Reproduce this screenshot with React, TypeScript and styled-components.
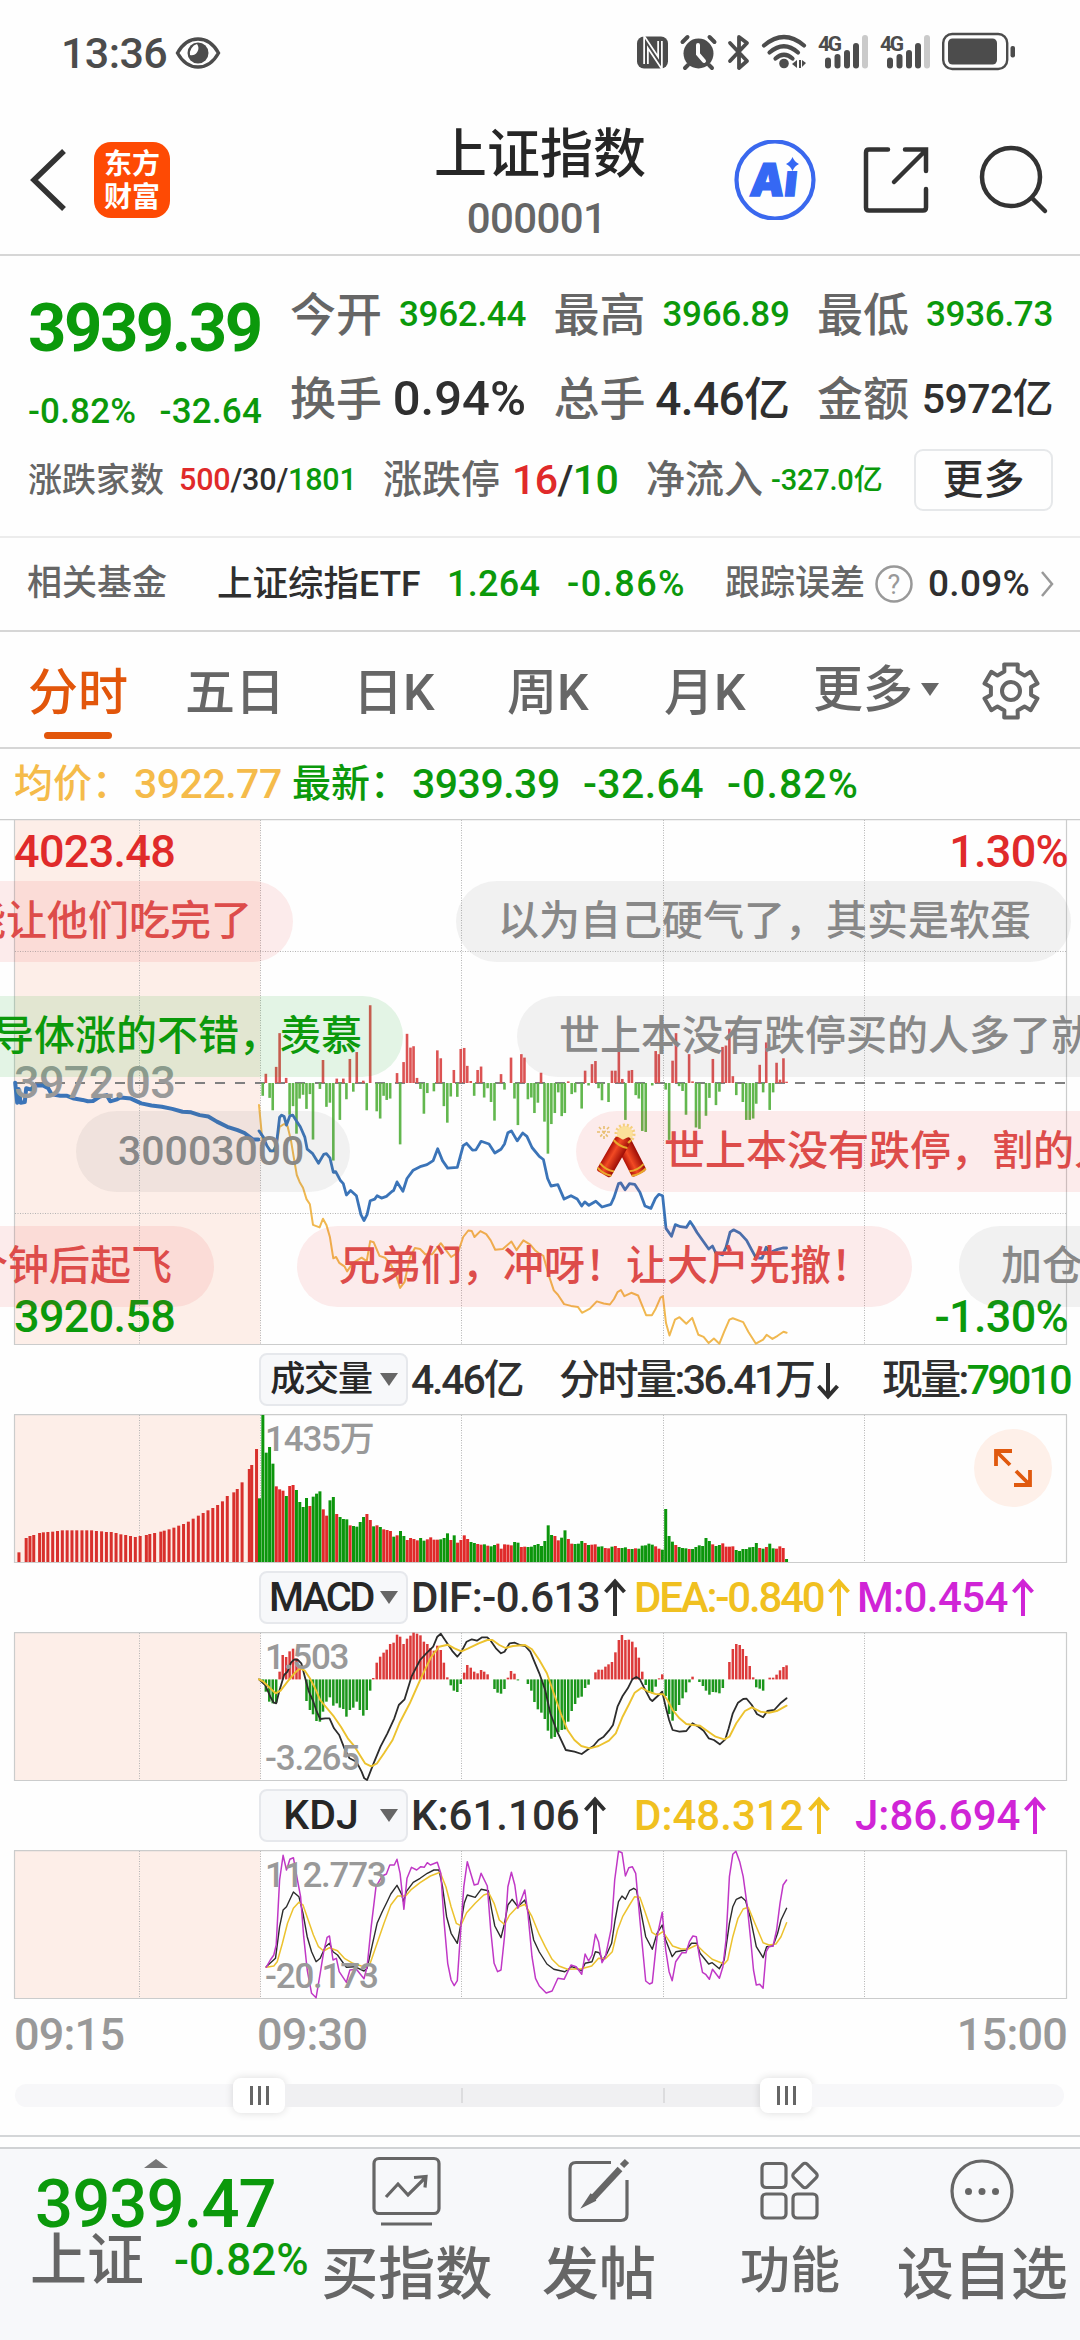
import React from 'react';
import styled, { createGlobalStyle, css } from 'styled-components';

const GREEN = '#0b990b';
const RED = '#e02a2a';
const DARK = '#2f2f2f';
const GRAY = '#666';
const YELLOW = '#f0c020';
const PURPLE = '#d024d6';
const LINE = '#cbcccc';

const Global = createGlobalStyle`
  html, body { margin: 0; padding: 0; background: #fefefe; }
  * { box-sizing: border-box; }
  body { font-family: Roboto, "Noto Sans CJK SC", sans-serif; font-weight: 500; }
`;

const Page = styled.div`
  width: 1080px;
  height: 2340px;
  overflow: hidden;
  display: flex;
  flex-direction: column;
  background: #fefefe;
  color: ${DARK};
  white-space: nowrap;
`;

/* ---------- status bar ---------- */
const StatusBar = styled.div`
  display: flex;
  justify-content: space-between;
  height: 106px;
  padding: 0 62px 0 61px;
  color: #4c4c4c;
`;
const Clock = styled.div`
  display: flex;
  align-items: center;
  gap: 8px;
  font-size: 43px;
  line-height: 106px;
  letter-spacing: -0.6px;
`;

const StatusIcons = () => (
  <svg width="382" height="106" viewBox="636 0 382 106" fill="#4c4c4c">
    <rect x="637" y="36.500" width="31" height="32" rx="7" />
    <path d="M646 64 V42 L660 63 V41" fill="none" stroke="#fefefe" strokeWidth="5.500" />
    <path d="M646 68 V42 L660 63 V37" fill="none" stroke="#4c4c4c" strokeWidth="2" />
    <circle cx="698.500" cy="53.500" r="15" />
    <path d="M682.500 42l5-5M714.500 42l-5-5M688 65l-3 3M709 65l3 3" stroke="#4c4c4c" strokeWidth="4" strokeLinecap="round" />
    <path d="M698 45v9l6 7" stroke="#fefefe" strokeWidth="4" fill="none" strokeLinecap="round" />
    <path d="M730 43l17 18-8 7V37l8 6-17 18" fill="none" stroke="#4c4c4c" strokeWidth="3.800" strokeLinecap="round" strokeLinejoin="round" />
    <g fill="none" stroke="#4c4c4c" strokeWidth="4.200" strokeLinecap="round">
      <path d="M764 45.500q20-17 40 0" />
      <path d="M769.500 52.500q14.500-12.500 28.500 0" />
      <path d="M775.500 58.500q8.500-7.500 17 0" />
    </g>
    <circle cx="784" cy="63.500" r="4.800" />
    <path d="M792 64l5-4v8zM799 60h2v8h-2zM802 60l4 3-4 4z" />
    {[0, 62].map((o) => (
      <g key={o}>
        <text x={818 + o} y="51" fontSize="21" fontWeight="700" textLength="24" fontFamily="Roboto, sans-serif">4G</text>
        <rect x={825 + o} y="57.500" width="6" height="11" rx="3" />
        <rect x={834.500 + o} y="54" width="6" height="14.500" rx="3" />
        <rect x={844 + o} y="50" width="6" height="18.500" rx="3" />
        <rect x={853 + o} y="43" width="6" height="25.500" rx="3" />
        <rect x={862 + o} y="35" width="6" height="33.500" rx="3" fill="#cacaca" />
      </g>
    ))}
    <rect x="943.200" y="34" width="64" height="35" rx="9" fill="none" stroke="#4c4c4c" strokeWidth="2.400" />
    <rect x="948" y="38.500" width="49" height="26" rx="4.500" />
    <rect x="1010.500" y="46" width="4.500" height="11.500" rx="2" />
  </svg>
);

const EyeIcon = () => (
  <svg width="46" height="34" viewBox="0 0 46 34">
    <path d="M2.500 17C8 7 15 3 23 3s15 4 20.500 14C38 27 31 31 23 31S8 27 2.500 17z" fill="none" stroke="#4c4c4c" strokeWidth="3.400" />
    <circle cx="23" cy="17" r="10.500" fill="#4c4c4c" />
    <path d="M22 8a7 7 0 0 1-7 11a10 10 0 0 1 7-11z" fill="#fefefe" />
  </svg>
);

/* ---------- header ---------- */
const Header = styled.div`
  display: grid;
  grid-template-columns: 94px 200px 436px 124px 116px 110px;
  height: 150px;
  border-bottom: 2px solid #d6d6d6;
`;
const HeadIcon = styled.div`
  padding-top: 34px;
`;
const Logo = styled.div`
  width: 76px;
  height: 76px;
  margin-top: 36px;
  border-radius: 17px;
  background: #fe4a04;
  color: #fff;
  font-weight: 700;
  font-size: 28px;
  line-height: 33px;
  padding-top: 6px;
  text-align: center;
`;
const TitleBlock = styled.div`
  text-align: center;
  width: 492px;
  padding-top: 12px;
`;
const Title = styled.div`
  font-size: 53px;
  line-height: 74px;
  color: #262626;
`;
const Code = styled.div`
  font-size: 42px;
  line-height: 54px;
  padding-right: 7px;
  color: ${GRAY};
  letter-spacing: -0.6px;
`;

/* ---------- quote ---------- */
const Quote = styled.div`
  height: 282px;
  padding: 17px 27px 0 28px;
  border-bottom: 2px solid #ececec;
`;
const QuoteTop = styled.div`
  display: flex;
  height: 168px;
`;
const PriceCol = styled.div`
  width: 263px;
  color: ${GREEN};
`;
const Price = styled.div`
  font-size: 67px;
  font-weight: 700;
  line-height: 110px;
  letter-spacing: -2.5px;
`;
const Changes = styled.div`
  display: flex;
  justify-content: space-between;
  padding-right: 28px;
  font-size: 35px;
  line-height: 58px;
  letter-spacing: 0.2px;
`;
const Stats = styled.div`
  display: grid;
  grid-template-columns: repeat(3, 236px);
  column-gap: 27.500px;
  grid-auto-rows: 84px;
`;
const Stat = styled.div`
  display: flex;
  justify-content: space-between;
  align-items: center;
  line-height: 84px;
`;
const StatName = styled.span`
  font-size: 46px;
  color: ${GRAY};
`;
const StatValue = styled.span<{ $size: number; $color: string; $ls?: number }>`
  font-size: ${(p) => p.$size}px;
  color: ${(p) => p.$color};
  letter-spacing: ${(p) => p.$ls || 0}px;
`;
const Breadth = styled.div`
  display: flex;
  align-items: center;
  height: 78px;
`;
const Cell = styled.span<{ $w: number; $size: number; $color?: string; $ls?: number }>`
  flex: none;
  width: ${(p) => p.$w}px;
  font-size: ${(p) => p.$size}px;
  line-height: 60px;
  color: ${(p) => p.$color || DARK};
  letter-spacing: ${(p) => p.$ls || 0}px;
`;
const Tint = styled.span<{ $c: string }>`
  color: ${(p) => p.$c};
`;
const MoreButton = styled.div`
  width: 139px;
  height: 62px;
  border: 2px solid #e6e8ea;
  border-radius: 9px;
  text-align: center;
  font-size: 41px;
  line-height: 58px;
`;

/* ---------- fund row ---------- */
const FundRow = styled.div`
  display: flex;
  align-items: center;
  height: 94px;
  padding-left: 27px;
  border-bottom: 2px solid #d6d6d6;
`;
const Help = styled.span`
  width: 54px;
  height: 40px;
`;

/* ---------- tabs ---------- */
const Tabs = styled.div`
  display: flex;
  height: 117px;
  padding-left: 28px;
  border-bottom: 2px solid #d6d6d6;
  font-size: 50px;
  line-height: 122px;
  color: ${GRAY};
`;
const Tab = styled.div<{ $w: number; $on?: boolean }>`
  width: ${(p) => p.$w}px;
  ${(p) =>
    p.$on &&
    css`
      color: #e2560b;
      &::after {
        content: '';
        display: block;
        width: 68px;
        height: 7px;
        margin: -22px 0 0 16px;
        border-radius: 4px;
        background: #e2560b;
      }
    `}
`;
const Triangle = styled.span<{ $up?: boolean; $w?: number }>`
  flex: none;
  display: inline-block;
  border-left: ${(p) => p.$w || 9}px solid transparent;
  border-right: ${(p) => p.$w || 9}px solid transparent;
  ${(p) => (p.$up ? 'border-bottom: 9px solid #777;' : 'border-top: 13px solid #666;')}
`;
const MoreTab = styled(Tab)`
  display: flex;
  align-items: center;
  gap: 8px;
`;
const GearBox = styled.div`
  padding-top: 29px;
  svg {
    display: block;
  }
`;

const InfoRow = styled.div`
  display: flex;
  align-items: center;
  height: 70px;
  padding-left: 14px;
`;

/* ---------- charts ---------- */
const Panel = styled.div<{ $h: number }>`
  position: relative;
  height: ${(p) => p.$h}px;
  overflow: hidden;
  svg {
    display: block;
  }
`;
const Corner = styled.span<{ $y: number; $c: string; $right?: boolean }>`
  position: absolute;
  top: ${(p) => p.$y}px;
  ${(p) => (p.$right ? 'right: 12px;' : 'left: 14px;')}
  font-size: 45px;
  line-height: 50px;
  letter-spacing: -0.7px;
  color: ${(p) => p.$c};
`;
const Scale = styled.span<{ $y: number }>`
  position: absolute;
  left: 265px;
  top: ${(p) => p.$y}px;
  font-size: 35px;
  line-height: 42px;
  letter-spacing: -1.2px;
  color: #999;
`;
const bubbleTone = {
  red: css`
    background: rgba(235, 50, 50, 0.095);
    color: #dd4c4a;
  `,
  gray: css`
    background: rgba(110, 110, 110, 0.085);
    color: #888;
  `,
  green: css`
    background: rgba(30, 170, 50, 0.12);
    color: ${GREEN};
  `,
};
const Bubble = styled.div<{ $x: number; $w: number; $row: number; $tone: keyof typeof bubbleTone; $pad?: number }>`
  position: absolute;
  left: ${(p) => p.$x}px;
  width: ${(p) => p.$w}px;
  top: ${(p) => 62 + p.$row * 115}px;
  height: 81px;
  border-radius: 41px;
  padding-left: ${(p) => p.$pad ?? 42}px;
  font-size: 41px;
  line-height: 81px;
  display: flex;
  ${(p) => bubbleTone[p.$tone]}
`;
const IndicatorBar = styled.div<{ $h: number }>`
  display: flex;
  align-items: center;
  height: ${(p) => p.$h}px;
  padding-left: 259px;
`;
const Picker = styled.div`
  display: flex;
  align-items: center;
  justify-content: space-between;
  width: 149px;
  height: 53px;
  margin-right: 3px;
  padding: 0 8px 0 8px;
  border: 2px solid #e6e8ec;
  border-radius: 8px;
  background: #f7f8fa;
  color: #262626;
`;
const PickerName = styled.span<{ $size: number; $ls?: number }>`
  width: 104px;
  text-align: center;
  font-size: ${(p) => p.$size}px;
  line-height: 49px;
  letter-spacing: ${(p) => p.$ls || 0}px;
`;
const Reading = styled.span<{ $w: number; $c?: string; $ls?: number; $size?: number }>`
  display: flex;
  flex: none;
  align-items: center;
  width: ${(p) => p.$w}px;
  font-size: ${(p) => p.$size || 42}px;
  line-height: 52px;
  letter-spacing: ${(p) => p.$ls || 0}px;
  color: ${(p) => p.$c || DARK};
  svg {
    flex: none;
  }
`;
const Expand = styled.div`
  position: absolute;
  right: 28px;
  top: 15px;
  width: 78px;
  height: 78px;
  border-radius: 50%;
  background: #fef0e9;
`;
const Times = styled.div`
  display: flex;
  height: 72px;
  padding: 0 13px 0 14px;
  font-size: 45px;
  line-height: 72px;
  letter-spacing: -0.8px;
  color: #999;
  span:nth-child(1) { width: 243px; }
  span:nth-child(2) { flex: 1; }
`;

const Arrow = ({ down, c }: { down?: boolean; c?: string }) => (
  <svg width="30" height="40" viewBox="0 0 30 40">
    <path d={down ? 'M15 3v33M5.500 26l9.500 10.500L24.500 26' : 'M15 38V4M5.500 14L15 3.500 24.500 14'} fill="none" stroke={c || DARK} strokeWidth="4" />
  </svg>
);

/* ---------- data ---------- */
type Pt = [number, number];
const parse = (left: string, right = ''): Pt[] => {
  const read = (s: string, off: number): Pt[] =>
    s.trim() === '' ? [] : s.trim().split(/\s+/).map((t) => {
      const [a, b] = t.split(':').map(Number);
      return [a / 2.904 + off, b];
    });
  return [...read(left, 0), ...read(right, 540)];
};
const project = (pts: Pt[], k: number, off: number): Pt[] => pts.map(([x, y]) => [x, y / k + off]);
const poly = (pts: Pt[]) => pts.map(([x, y]) => `${x.toFixed(1)},${y.toFixed(1)}`).join(' ');

const flow = parse(
  `772:766 802:746 812:648 831:778 938:726 978:780 997:780 1016:723 1036:703 1055:786 1075:567 1153:764 1172:732 1182:650 1192:690 1201:686 1211:778 1270:698 1280:721 1318:755 1338:694 1348:691 1357:743 1367:787 1387:755 1397:745 1455:767 1484:719 1514:709 1523:719
   763:830 783:836 792:872 841:885 851:860 861:940 870:838 880:827 890:868 900:825 909:957 929:810 948:862 958:850 968:1018 987:900 1006:840 1026:818 1065:872 1094:875 1104:896 1114:830 1123:842 1133:838 1162:971 1221:810 1231:882 1241:822 1260:817 1289:860 1299:908 1309:832 1328:833 1377:830 1406:835 1416:808 1426:848 1436:902 1465:812 1494:838 1504:915 1533:840 1543:835 1552:880 1562:850`,
  `3:763 82:788 131:757 151:738 161:729 209:757 219:757 229:680 239:781 258:757 267:755 336:700 345:709 385:728 395:648 433:709 443:788 502:723 530:688 540:684 550:635 560:773 638:740 657:675 687:734 697:783 707:721 716:789
   13:905 23:998 33:912 43:880 53:820 63:889 72:880 92:825 102:820 121:867 141:800 170:808 180:843 199:848 248:900 278:828 287:838 297:932 307:935 326:800 365:812 375:958 404:802 414:816 424:885 453:922 463:926 482:888 492:836 511:857 521:818 570:828 589:848 599:900 609:900 619:896 628:853 648:820 667:871 677:820`
);
const preOpen = parse(`44:792 50:850 54:810 60:850 72:848 76:808 90:812 100:800 125:800 140:808 150:826 175:830 195:830 215:838 240:842 255:846 270:845 290:832 310:828 320:846 340:840 350:835 380:838 410:852 440:858 470:862 500:868 530:876 555:878 580:886 605:890 630:905 660:920 690:930 710:938 735:957 750:957`);
const priceLine = parse(
  `752:932 765:950 775:975 785:990 795:990 803:970 812:892 818:886 825:890 832:915 842:888 850:886 862:905 872:920 885:950 892:985 908:998 925:1026 940:1000 948:998 958:1010 968:1052 975:1050 988:1075 997:1085 1006:1118 1018:1105 1035:1120 1048:1175 1057:1192 1066:1175 1075:1135 1088:1130 1095:1120 1108:1127 1122:1122 1138:1108 1143:1105 1153:1080 1170:1107 1182:1070 1200:1046 1220:1036 1240:1030 1258:1018 1271:984 1285:1018 1300:1040 1328:1038 1345:975 1355:968 1372:988 1382:987 1397:962 1420:970 1437:996 1455:985 1465:970 1475:937 1485:932 1502:961 1518:938 1530:948 1545:980 1566:1006`,
  `10:1015 22:1070 32:1092 52:1088 70:1130 90:1120 108:1130 121:1150 130:1138 142:1148 162:1136 180:1153 206:1145 215:1125 228:1085 235:1083 247:1103 260:1085 275:1087 290:1110 305:1150 322:1157 335:1128 345:1116 356:1120 366:1215 382:1238 393:1204 408:1210 425:1212 436:1195 445:1208 456:1227 490:1275 501:1266 510:1285 530:1292 540:1270 552:1226 562:1219 580:1228 600:1250 615:1278 627:1300 645:1302 657:1270 668:1285 690:1276 705:1272 716:1272`
);
const avgLine = parse(
  `752:857 762:960 775:975 790:992 803:975 812:920 825:912 835:918 845:960 855:1020 862:1060 870:1080 880:1097 890:1130 900:1145 909:1205 928:1212 938:1187 948:1205 958:1240 968:1302 976:1298 985:1315 1000:1325 1008:1340 1025:1315 1050:1300 1065:1310 1075:1252 1085:1255 1102:1295 1118:1300 1135:1320 1150:1350 1162:1388 1175:1370 1190:1300 1205:1272 1220:1275 1235:1290 1255:1290 1280:1258 1310:1298 1330:1285 1345:1240 1360:1221 1370:1223 1378:1240 1395:1223 1412:1232 1425:1250 1438:1277 1460:1275 1485:1253 1500:1278 1520:1250 1540:1262 1555:1280 1566:1288`,
  `10:1295 25:1350 40:1395 52:1408 70:1435 90:1440 110:1443 122:1460 145:1448 165:1427 185:1433 203:1436 215:1420 225:1400 235:1394 245:1412 265:1402 285:1410 295:1435 308:1467 325:1467 335:1450 350:1416 357:1412 366:1490 376:1526 392:1480 405:1473 425:1492 442:1475 460:1524 475:1530 490:1548 505:1535 521:1550 535:1515 550:1480 560:1476 590:1487 605:1515 627:1550 648:1538 658:1524 675:1536 690:1527 707:1515 716:1518`
);

const auction = parse(`55:637 76:594 87:588 98:585 115:579 126:577 139:576 153:575 167:573 181:571 195:571 209:571 223:571 238:571 252:571 266:571 280:573 295:574 309:576 323:576 337:579 351:583 365:585 379:588 393:591 407:588 425:585 435:582 449:579 467:575 477:572 491:568 505:563 519:557 533:552 547:545 561:536 576:527 590:519 604:511 618:504 632:495 646:484 660:468 679:457 689:447 703:427 724:387 731:375 745:327`);
const volume = `g475 g225 g338 g321 g371 r439 r448 r452 g468 r438 r435 g450 g486 g501 g474 r498 g470 g461 g454 r508 r527 g481 g471 r522 g531 g537 g538 r556 g558 g560 g546 g531 r522 r540 g559 r556 g561 r568 r570 r573 g590 r586 g573 g588 r600 r594 r597 r601 g594 g602 r598 r592 r599 r599 g598 g594 g580 r600 g586 r608 r600 r586 r597 g606 g609 r612 r614 g613 r617 g619 g615 r611 r626 r613 r614 r616 g606 g608 r621 r620 g621 g620 g615 g612 g618 g603 g556 g585 r588 r601 g593 g571 r597 r611 g612 g611 g603 r609 g615 r614 r613 g620 g619 r624 r625 g620 r618 r624 g624 g622 r627 g627 r625 g626 g617 g616 g611 g614 r619 r626 g629 g507 g588 g605 r615 g621 g624 g625 r627 g627 g621 g616 g618 g594 g603 r613 g618 g615 r610 r620 r620 r619 g630 g633 g627 g627 g622 g621 g609 r624 g626 r621 g611 g625 r626 r619 r624 g657`.split(' ');

const macdHist = parse(
  `763:1026 772:1055 782:1085 792:1090 802:1088 812:995 821:945 831:951 841:934 851:926 861:955 870:975 890:1083 900:1110 909:1123 919:1143 929:1145 938:1115 948:1085 958:1072 968:1097 978:1090 987:1103 997:1107 1006:1130 1016:1110 1026:1103 1036:1085 1045:1110 1055:1127 1065:1110 1075:1052 1084:1014 1094:968 1104:950 1114:938 1123:929 1133:912 1143:908 1153:884 1162:890 1172:912 1182:896 1192:887 1201:878 1211:881 1221:886 1231:905 1241:912 1250:924 1260:932 1270:917 1280:930 1289:968 1299:1012 1309:1036 1318:1052 1328:1056 1338:1032 1348:998 1357:975 1367:983 1377:995 1387:1000 1397:990 1406:995 1416:1003 1436:1047 1445:1058 1455:1061 1465:1047 1475:1013 1484:993 1494:1001 1504:1021 1533:1032 1543:1052 1552:1086 1562:1108`,
  `4:1118 14:1137 23:1172 33:1196 43:1191 53:1177 63:1170 72:1168 82:1145 92:1113 102:1092 111:1073 121:1070 131:1044 141:1034 161:997 170:989 180:989 190:980 199:973 209:966 219:937 229:900 238:885 248:900 258:899 268:905 278:922 287:953 297:995 307:1035 317:1058 326:1060 336:1040 346:1015 355:1003 365:1068 375:1122 385:1142 394:1113 404:1095 414:1075 424:1057 434:1027 443:1010 463:1026 473:1038 482:1052 492:1064 502:1056 511:1057 521:1060 531:1044 550:966 560:927 570:912 580:915 589:927 599:948 609:978 619:1012 628:1042 638:1046 648:1052 667:1013 677:1013 687:1004 697:991 707:981 716:976`
);
const dif = parse(
  `752:1018 770:1035 785:1070 795:1088 802:1090 812:1050 825:1005 835:995 845:968 855:958 865:960 875:970 885:1010 897:1055 910:1085 920:1115 930:1137 945:1135 957:1135 970:1165 985:1185 1000:1225 1015:1255 1035:1265 1050:1295 1058:1315 1066:1320 1085:1270 1105:1220 1125:1180 1145:1135 1158:1095 1175:1078 1195:1010 1220:960 1240:938 1258:920 1270:890 1280:881 1300:912 1315:935 1328:950 1340:935 1355:905 1370:898 1385:902 1400:892 1415:892 1425:902 1440:925 1455:940 1465:935 1480:910 1495:908 1510:915 1525:918 1540:935 1552:965 1566:1000`,
  `15:1050 30:1120 50:1175 75:1230 100:1235 121:1242 140:1228 155:1218 170:1200 185:1190 200:1172 212:1155 225:1100 240:1068 255:1045 268:1018 280:1011 290:1018 305:1048 320:1078 326:1083 345:1065 355:1055 365:1100 375:1140 385:1170 405:1175 425:1173 443:1150 460:1160 475:1172 490:1195 505:1200 522:1213 538:1198 548:1165 560:1120 575:1088 590:1077 600:1076 615:1095 630:1122 648:1132 660:1113 680:1110 700:1088 716:1075`
);
const dea = parse(
  `752:1018 765:1025 780:1040 800:1060 815:1052 835:1025 855:1000 872:985 885:992 900:1015 915:1045 930:1080 950:1105 970:1130 990:1160 1010:1195 1030:1220 1045:1245 1060:1270 1078:1279 1095:1270 1115:1240 1140:1200 1160:1150 1190:1090 1220:1020 1250:955 1275:920 1300:914 1320:925 1340:934 1360:925 1390:910 1415:900 1430:900 1450:915 1468:924 1490:918 1525:915 1545:928 1566:960`,
  `20:1000 40:1060 60:1120 80:1170 100:1200 120:1218 145:1225 170:1218 200:1202 220:1180 240:1130 260:1090 275:1058 295:1043 315:1055 335:1062 358:1063 370:1080 385:1110 405:1135 425:1152 445:1155 465:1157 485:1172 510:1190 535:1198 550:1190 570:1150 595:1113 615:1102 640:1115 665:1118 690:1112 716:1097`
);

const kdjJ = parse(
  `773:592 785:570 795:555 802:525 812:330 822:256 832:300 842:268 852:263 862:320 873:380 882:500 892:600 905:670 918:683 930:610 940:545 950:502 957:498 967:570 977:565 985:605 1006:637 1016:600 1035:598 1057:626 1066:590 1078:470 1092:350 1110:318 1122:312 1132:285 1145:285 1153:268 1162:310 1173:418 1182:325 1195:292 1210:300 1222:290 1232:292 1241:278 1250:285 1270:277 1280:310 1290:460 1300:580 1310:630 1319:647 1328:632 1338:480 1347:350 1357:275 1367:310 1377:345 1388:342 1397:310 1415:348 1425:480 1435:580 1445:605 1455:600 1465:500 1475:350 1485:307 1495:345 1504:415 1524:360 1533:430 1545:560 1555:625 1566:648`,
  `18:669 35:663 52:625 70:628 90:585 105:590 121:613 131:552 141:573 151:555 161:493 170:515 180:578 190:560 207:475 217:330 228:244 238:248 248:318 258:293 268:290 278:310 290:450 307:633 318:642 326:638 340:500 355:427 365:540 375:605 384:632 394:575 412:548 424:548 434:515 444:498 454:500 463:560 472:607 482:614 492:628 501:598 521:625 531:590 540:510 550:320 560:253 569:244 580:275 590:320 602:410 612:510 620:600 628:645 638:643 648:655 657:545 665:530 677:528 687:480 697:400 706:345 716:330`
);
const kdjK = parse(
  `773:590 800:565 812:470 822:420 832:410 852:366 868:380 880:430 892:500 905:545 918:575 930:565 945:530 957:520 967:545 980:555 1006:592 1030:590 1057:603 1066:595 1080:530 1095:460 1110:425 1122:400 1135:372 1153:346 1165:370 1172:395 1180:365 1200:337 1220:325 1241:310 1260:300 1275:300 1285:350 1297:440 1310:490 1328:520 1338:465 1348:400 1357:375 1380:382 1397:358 1418:362 1428:420 1437:468 1455:503 1465:460 1475:405 1487:388 1504:410 1524:390 1535:430 1550:510 1566:546`,
  `20:582 40:598 72:605 92:590 121:602 131:580 151:575 161:545 172:548 182:570 195:550 208:520 218:450 228:395 238:378 248:388 260:362 272:355 280:360 292:420 307:500 326:538 340:490 355:465 365:510 384:560 395:545 424:540 440:520 455:520 465:550 490:582 500:578 521:596 535:570 550:460 560:410 570:388 585:381 597:392 610:440 628:530 648:563 658:530 677:527 690:490 700:450 716:415`
);
const kdjD = parse(
  `773:592 795:588 805:575 820:520 835:460 852:415 868:397 880:405 895:450 910:495 925:530 940:543 957:533 980:542 1000:565 1025:580 1060:592 1075:580 1095:520 1115:460 1135:405 1155:378 1178:378 1195:358 1220:338 1250:318 1278:307 1295:350 1310:410 1325:460 1338:467 1355:428 1380:400 1405:375 1420:370 1435:400 1450:450 1465:463 1480:435 1500:413 1525:403 1545:440 1566:494`,
  `15:530 35:568 55:588 80:598 120:596 150:588 170:565 190:566 210:545 225:480 240:440 260:405 275:380 290:382 305:425 325:487 340:497 357:485 370:505 385:528 410:537 430:537 455:525 475:545 500:568 535:582 545:570 560:500 575:445 590:417 605:412 620:450 648:518 665:525 685:522 700:500 716:458`
);

const Curve = ({ pts, c, w }: { pts: Pt[]; c: string; w: number }) => (
  <polyline points={poly(pts)} fill="none" stroke={c} strokeWidth={w} strokeLinejoin="round" strokeLinecap="round" />
);
const Bars = ({ pts, base, w, up, down }: { pts: Pt[]; base: number; w: number; up: string; down: string }) => (
  <>
    {pts.map(([x, y], i) => (
      <rect key={i} x={x - w / 2} width={w} y={Math.min(y, base)} height={Math.max(Math.abs(y - base), 1)} fill={y < base ? up : down} />
    ))}
  </>
);
const Grid = ({ h, wideTop }: { h: number; wideTop?: boolean }) => (
  <>
    <rect x="15" y="1" width="245.500" height={h - 2} fill="#fdeee8" />
    {[139.5, 260.5, 461.5, 663.5, 864.5].map((x) => (
      <line key={x} x1={x} x2={x} y1="1" y2={h} stroke="#b4b4b4" strokeDasharray="1 1.500" />
    ))}
    <path d={`M14.500 .5V${h - 0.5}H1066.500V.5`} fill="none" stroke={LINE} strokeWidth="1.200" />
    <line x1={wideTop ? 0 : 14} x2={wideTop ? 1080 : 1067} y1=".5" y2=".5" stroke={LINE} strokeWidth="1.400" />
  </>
);

const PriceChart = () => (
  <svg width="1080" height="526" viewBox="0 0 1080 526">
    <Grid h={526} wideTop />
    <line x1="15" x2="1066" y1="132.500" y2="132.500" stroke="#b4b4b4" strokeDasharray="1 1.500" />
    <line x1="15" x2="1066" y1="394.500" y2="394.500" stroke="#b4b4b4" strokeDasharray="1 1.500" />
    <line x1="15" x2="1066" y1="264" y2="264" stroke="#808080" strokeWidth="2" strokeDasharray="10 10" />
    <Bars pts={project(flow, 2.904, -9)} base={264} w={2.6} up="#dc5353" down="#62b74e" />
    <Curve pts={project(avgLine, 2.904, -9)} c="#f0b850" w={2} />
    <Curve pts={project(preOpen, 2.904, -9)} c="#3b74b8" w={4} />
    <Curve pts={project(priceLine, 2.904, -9)} c="#3b74b8" w={2.8} />
  </svg>
);
const VolumeChart = () => (
  <svg width="1080" height="149" viewBox="0 0 1080 149">
    <Grid h={149} />
    <Bars pts={project(auction, 3, -74)} base={148} w={3} up="#d8302c" down={GREEN} />
    {volume.map((v, i) => {
      const y = Number(v.slice(1)) / 3 - 74;
      return <rect key={i} x={258 + i * 3.357} y={y} width="3" height={148 - y} fill={v[0] === 'r' ? RED : '#0c960c'} />;
    })}
  </svg>
);
const MacdChart = () => (
  <svg width="1080" height="149" viewBox="0 0 1080 149">
    <Grid h={149} />
    <Bars pts={project(macdHist, 3, -292)} base={47.4} w={2.500} up="#dc3a3a" down="#1c961c" />
    <Curve pts={project(dif, 3, -292)} c="#2c2c2c" w={1.800} />
    <Curve pts={project(dea, 3, -292)} c="#ecc22e" w={1.900} />
  </svg>
);
const KdjChart = () => (
  <svg width="1080" height="149" viewBox="0 0 1080 149">
    <Grid h={149} />
    <Curve pts={project(kdjK, 3, -80)} c="#2c2c2c" w={1.400} />
    <Curve pts={project(kdjD, 3, -80)} c="#ecc22e" w={1.500} />
    <Curve pts={project(kdjJ, 3, -80)} c="#c038c6" w={1.500} />
  </svg>
);

const Firecracker = () => (
  <svg width="70" height="81" viewBox="0 0 70 81">
    <defs>
      <linearGradient id="tube" x1="0" x2="1">
        <stop offset="0" stopColor="#b01208" />
        <stop offset=".4" stopColor="#f24a24" />
        <stop offset="1" stopColor="#9c0c06" />
      </linearGradient>
    </defs>
    <g stroke="#e8bf70" strokeWidth="1.600" strokeDasharray="3 2">
      <path d="M10 15v13M3 21h14M5 16l10 11M15 16L5 27" />
    </g>
    <circle cx="31" cy="23" r="8" fill="#fbe09a" />
    <circle cx="31" cy="23" r="9" fill="none" stroke="#f5cf7c" strokeWidth="3" strokeDasharray="2 2" />
    <g transform="rotate(-27 37 46)">
      <rect x="29" y="27" width="16" height="38" rx="3" fill="url(#tube)" />
      <path d="M29 31q8 3 16 0M29 58q8 3 16 0M29 63q8 3 16 0" stroke="#e9a92c" strokeWidth="2" fill="none" />
    </g>
    <g transform="rotate(30 19 46)">
      <rect x="11" y="26" width="16" height="40" rx="3" fill="url(#tube)" />
      <path d="M11 31q8 3 16 0M11 58q8 3 16 0M11 63q8 3 16 0" stroke="#e9a92c" strokeWidth="2" fill="none" />
    </g>
  </svg>
);

/* ---------- range slider ---------- */
const RangeRow = styled.div`
  display: flex;
  align-items: center;
  height: 48px;
  margin: 0 16px 16px 15px;
`;
const Track = styled.div<{ $w: number; $side?: 'l' | 'r' }>`
  width: ${(p) => p.$w}px;
  height: 23px;
  background: ${(p) => (p.$side ? '#f7f7f9' : '#f0f0f2')};
  border-radius: ${(p) => (p.$side === 'l' ? '12px 0 0 12px' : p.$side === 'r' ? '0 12px 12px 0' : '0')};
  display: flex;
  align-items: center;
  padding-left: ${(p) => (p.$side ? 0 : 176)}px;
  gap: 200px;
`;
const Tick = styled.i`
  width: 2px;
  height: 15px;
  background: #dcdcde;
`;
const Handle = styled.div`
  display: flex;
  justify-content: center;
  align-items: center;
  gap: 5px;
  width: 52px;
  height: 35px;
  border-radius: 8px;
  background: #fff;
  box-shadow: 0 0 8px rgba(0, 0, 0, 0.14);
  i {
    width: 3px;
    height: 19px;
    background: #666;
  }
`;

/* ---------- bottom bar ---------- */
const Spacer = styled.div`
  flex: none;
  height: 12px;
  border-top: 2px solid #d4d6d8;
`;
const BottomBar = styled.div`
  flex: 1;
  display: flex;
  background: #f7f8fa;
  border-top: 2px solid #d0d2d4;
  color: ${GRAY};
`;
const IndexBox = styled.div`
  width: 312px;
  padding-left: 30px;
`;
const Caret = styled.div`
  height: 25px;
  padding: 10px 0 0 114px;
  line-height: 0;
`;
const IndexValue = styled.div`
  height: 60px;
  padding-left: 5px;
  font-size: 67px;
  line-height: 60px;
  letter-spacing: -0.9px;
  color: ${GREEN};
`;
const IndexLine = styled.div`
  display: flex;
  font-size: 57px;
  line-height: 54px;
`;
const IndexPct = styled.span`
  margin-left: 30px;
  font-size: 44px;
  line-height: 52px;
  color: ${GREEN};
`;
const Action = styled.div<{ $w: number; $size: number; $lh: number }>`
  width: ${(p) => p.$w}px;
  display: flex;
  flex-direction: column;
  align-items: center;
  font-size: ${(p) => p.$size}px;
  line-height: ${(p) => p.$lh}px;
  svg {
    display: block;
    flex: none;
  }
`;

const flowIcon = { width: 80, height: 86, viewBox: '0 0 80 86', fill: 'none', stroke: '#666', strokeWidth: 3.2 } as const;

const gearPoints = () => {
  const pts: string[] = [];
  for (let i = 0; i < 6; i++) {
    const a = (i * Math.PI) / 3 - Math.PI / 2;
    [[-0.33, 20.500], [-0.25, 27.5], [0.25, 27.5], [0.33, 20.500]].forEach(([d, r]) => {
      pts.push(`${(30 + r * Math.cos(a + d)).toFixed(1)},${(30 + r * Math.sin(a + d)).toFixed(1)}`);
    });
  }
  return pts.join(' ');
};

export default function App() {
  return (
    <Page>
      <Global />
      <StatusBar>
        <Clock>13:36<EyeIcon /></Clock>
        <StatusIcons />
      </StatusBar>

      <Header>
        <HeadIcon>
          <svg width="94" height="80" viewBox="0 140 94 80">
            <path d="M64 151L34 180l30 29" fill="none" stroke="#333" strokeWidth="5.500" />
          </svg>
        </HeadIcon>
        <Logo>东方<br />财富</Logo>
        <TitleBlock>
          <Title>上证指数</Title>
          <Code>000001</Code>
        </TitleBlock>
        <HeadIcon>
          <svg width="90" height="80" viewBox="730 140 90 80">
            <circle cx="775" cy="180" r="38.500" fill="none" stroke="#3a68ee" strokeWidth="4.200" />
            <text transform="translate(749 196) skewX(-6)" fontSize="45" fontWeight="900" fill="#3568f4" stroke="#3568f4" strokeWidth="1.500" fontFamily="Inter, sans-serif" textLength="47" lengthAdjust="spacingAndGlyphs">Ai</text>
            <rect x="784" y="155" width="17" height="16" fill="#fefefe" />
            <path d="M792.500 157q2 5 6.500 7-4.500 2-6.500 7-2-5-6.500-7 4.500-2 6.500-7z" fill="#3568f4" />
          </svg>
        </HeadIcon>
        <HeadIcon>
          <svg width="80" height="80" viewBox="854 140 80 80" fill="none" stroke="#333" strokeWidth="4.500" strokeLinecap="round">
            <path d="M888 149.500H869q-3 0-3 3v55q0 3 3 3h54q3 0 3-3V189" />
            <path d="M905 149.500h21V171M925 151l-31 31" />
          </svg>
        </HeadIcon>
        <HeadIcon>
          <svg width="90" height="80" viewBox="970 140 90 80" fill="none" stroke="#333" strokeWidth="4.500" strokeLinecap="round">
            <circle cx="1011" cy="177" r="29" />
            <path d="M1032 198l13 13" />
          </svg>
        </HeadIcon>
      </Header>

      <Quote>
        <QuoteTop>
          <PriceCol>
            <Price>3939.39</Price>
            <Changes><span>-0.82%</span><span>-32.64</span></Changes>
          </PriceCol>
          <Stats>
            <Stat><StatName>今开</StatName><StatValue $size={35} $color={GREEN} $ls={-0.3}>3962.44</StatValue></Stat>
            <Stat><StatName>最高</StatName><StatValue $size={35} $color={GREEN} $ls={-0.3}>3966.89</StatValue></Stat>
            <Stat><StatName>最低</StatName><StatValue $size={35} $color={GREEN} $ls={-0.3}>3936.73</StatValue></Stat>
            <Stat><StatName>换手</StatName><StatValue $size={49} $color={DARK}>0.94%</StatValue></Stat>
            <Stat><StatName>总手</StatName><StatValue $size={46} $color={DARK} $ls={-0.6}>4.46亿</StatValue></Stat>
            <Stat><StatName>金额</StatName><StatValue $size={41} $color={DARK} $ls={-0.6}>5972亿</StatValue></Stat>
          </Stats>
        </QuoteTop>
        <Breadth>
          <Cell $w={151} $size={34} $color={GRAY}>涨跌家数</Cell>
          <Cell $w={204} $size={30.500} $ls={-0.2}><Tint $c={RED}>500</Tint>/30/<Tint $c={GREEN}>1801</Tint></Cell>
          <Cell $w={129} $size={39} $color={GRAY}>涨跌停</Cell>
          <Cell $w={134} $size={41} $ls={-0.6}><Tint $c={RED}>16</Tint>/<Tint $c={GREEN}>10</Tint></Cell>
          <Cell $w={125} $size={39} $color={GRAY}>净流入</Cell>
          <Cell $w={143} $size={29} $color={GREEN} $ls={-0.2}>-327.0亿</Cell>
          <MoreButton>更多</MoreButton>
        </Breadth>
      </Quote>

      <FundRow>
        <Cell $w={190} $size={35} $color={GRAY}>相关基金</Cell>
        <Cell $w={230} $size={35.500}>上证综指ETF</Cell>
        <Cell $w={120} $size={36} $color={GREEN} $ls={0.3}>1.264</Cell>
        <Cell $w={158} $size={36} $color={GREEN} $ls={1.5}>-0.86%</Cell>
        <Cell $w={149} $size={35} $color={GRAY}>跟踪误差</Cell>
        <Help>
          <svg width="40" height="40" viewBox="0 0 40 40">
            <circle cx="20" cy="20" r="17.500" fill="none" stroke="#999" strokeWidth="2.500" />
            <text x="20" y="30" fontSize="27" fill="#999" textAnchor="middle" fontFamily="Roboto, sans-serif" fontWeight="400">?</text>
          </svg>
        </Help>
        <Cell $w={112} $size={37} $ls={0.3}>0.09%</Cell>
        <svg width="16" height="28" viewBox="0 0 16 28"><path d="M2 2l10 12L2 26" fill="none" stroke="#999" strokeWidth="2.500" /></svg>
      </FundRow>

      <Tabs>
        <Tab $w={157} $on>分时</Tab>
        <Tab $w={168}>五日</Tab>
        <Tab $w={154}>日K</Tab>
        <Tab $w={157}>周K</Tab>
        <Tab $w={149}>月K</Tab>
        <MoreTab $w={168}>更多<Triangle /></MoreTab>
        <GearBox>
          <svg width="60" height="60" viewBox="0 0 60 60" fill="none" stroke="#666" strokeWidth="4" strokeLinejoin="round">
            <polygon points={gearPoints()} />
            <circle cx="30" cy="30" r="9" />
          </svg>
        </GearBox>
      </Tabs>

      <InfoRow>
        <Cell $w={120} $size={39} $color="#f5bb4a">均价：</Cell>
        <Cell $w={158} $size={41} $color="#f5bb4a" $ls={-0.5}>3922.77</Cell>
        <Cell $w={120} $size={39} $color={GREEN}>最新：</Cell>
        <Cell $w={171} $size={41} $color={GREEN} $ls={-0.5}>3939.39</Cell>
        <Cell $w={144} $size={41} $color={GREEN} $ls={0.4}>-32.64</Cell>
        <Cell $w={150} $size={41} $color={GREEN} $ls={1.1}>-0.82%</Cell>
      </InfoRow>

      <Panel $h={526}>
        <PriceChart />
        <Corner $y={8} $c={RED}>4023.48</Corner>
        <Corner $y={8} $c={RED} $right>1.30%</Corner>
        <Corner $y={239} $c="#999">3972.03</Corner>
        <Corner $y={473} $c={GREEN}>3920.58</Corner>
        <Corner $y={473} $c={GREEN} $right>-1.30%</Corner>
        <Bubble $x={-80} $w={373} $row={0} $tone="red" $pad={45}>能让他们吃完了</Bubble>
        <Bubble $x={456} $w={615} $row={0} $tone="gray">以为自己硬气了，其实是软蛋</Bubble>
        <Bubble $x={-50} $w={453} $row={1} $tone="green" $pad={43}>导体涨的不错，羡慕</Bubble>
        <Bubble $x={517} $w={640} $row={1} $tone="gray">世上本没有跌停买的人多了就</Bubble>
        <Bubble $x={76} $w={274} $row={2} $tone="gray">30003000</Bubble>
        <Bubble $x={576} $w={600} $row={2} $tone="red" $pad={18}><Firecracker />世上本没有跌停，割的人</Bubble>
        <Bubble $x={-76} $w={290} $row={3} $tone="red" $pad={43}>个钟后起飞</Bubble>
        <Bubble $x={297} $w={615} $row={3} $tone="red">兄弟们，冲呀！让大户先撤！</Bubble>
        <Bubble $x={959} $w={300} $row={3} $tone="gray">加仓</Bubble>
      </Panel>

      <IndicatorBar $h={69}>
        <Picker><PickerName $size={35} $ls={-1.2}>成交量</PickerName><Triangle /></Picker>
        <Reading $w={148} $size={41} $ls={-2.2}>4.46亿</Reading>
        <Reading $w={323} $size={41} $ls={-2.5}>分时量:36.41万<Arrow down /></Reading>
        <Reading $w={190} $size={41} $ls={-2.7}>现量:<Tint $c={GREEN}>79010</Tint></Reading>
      </IndicatorBar>
      <Panel $h={149}>
        <VolumeChart />
        <Scale $y={5}>1435万</Scale>
        <Expand>
          <svg width="78" height="78" viewBox="0 0 78 78" fill="none" stroke="#e0590e" strokeWidth="3.800">
            <path d="M22 37V22h16M22 22l14 14M56 41v15H40M56 56L42 42" />
          </svg>
        </Expand>
      </Panel>

      <IndicatorBar $h={69}>
        <Picker><PickerName $size={40} $ls={-2.500}>MACD</PickerName><Triangle /></Picker>
        <Reading $w={223} $ls={-0.600}>DIF:-0.613<Arrow /></Reading>
        <Reading $w={223} $c={YELLOW} $ls={-2.200}>DEA:-0.840<Arrow c={YELLOW} /></Reading>
        <Reading $w={190} $c={PURPLE} $ls={-0.600}>M:0.454<Arrow c={PURPLE} /></Reading>
      </IndicatorBar>
      <Panel $h={149}>
        <MacdChart />
        <Scale $y={5}>1.503</Scale>
        <Scale $y={106}>-3.265</Scale>
      </Panel>

      <IndicatorBar $h={69}>
        <Picker><PickerName $size={41}>KDJ</PickerName><Triangle /></Picker>
        <Reading $w={223}>K:61.106<Arrow /></Reading>
        <Reading $w={221} $c={YELLOW}>D:48.312<Arrow c={YELLOW} /></Reading>
        <Reading $w={200} $c={PURPLE}>J:86.694<Arrow c={PURPLE} /></Reading>
      </IndicatorBar>
      <Panel $h={149}>
        <KdjChart />
        <Scale $y={5}>112.773</Scale>
        <Scale $y={106}>-20.173</Scale>
      </Panel>

      <Times><span>09:15</span><span>09:30</span><span>15:00</span></Times>

      <RangeRow>
        <Track $w={218} $side="l" />
        <Handle><i /><i /><i /></Handle>
        <Track $w={475}><Tick /><Tick /></Track>
        <Handle><i /><i /><i /></Handle>
        <Track $w={252} $side="r" />
      </RangeRow>

      <Spacer />
      <BottomBar>
        <IndexBox>
          <Caret><Triangle $up $w={12} /></Caret>
          <IndexValue>3939.47</IndexValue>
          <IndexLine>上证<IndexPct>-0.82%</IndexPct></IndexLine>
        </IndexBox>
        <Action $w={191} $size={57} $lh={79}>
          <svg {...flowIcon}>
            <rect x="7" y="9.500" width="65" height="55" rx="5" />
            <path d="M14 75h51M19 48l12-13 10 11 17-17M47 28.500l12-1-1 11" />
          </svg>
          买指数
        </Action>
        <Action $w={194} $size={57} $lh={79}>
          <svg {...flowIcon}>
            <path d="M52 13.500H17q-6 0-6 6v46q0 6 6 6h45q6 0 6-6V31" />
            <path d="M34 49l27-29" strokeWidth="6.500" />
            <path d="M63 17l5-5M34 46l-4 6 6-3" strokeWidth="6" />
          </svg>
          发帖
        </Action>
        <Action $w={189} $size={50} $lh={73}>
          <svg {...flowIcon}>
            <rect x="12" y="14.500" width="24" height="24" rx="4" />
            <rect x="12" y="45" width="24" height="24" rx="4" />
            <rect x="43" y="45" width="24" height="24" rx="4" />
            <rect x="45.500" y="17" width="19" height="19" rx="3" transform="rotate(45 55 26.500)" />
          </svg>
          功能
        </Action>
        <Action $w={196} $size={57} $lh={79}>
          <svg {...flowIcon}>
            <circle cx="40" cy="42" r="30" />
            <g fill="#666" stroke="none">
              <circle cx="26.500" cy="42.500" r="3.500" />
              <circle cx="40" cy="42.500" r="3.500" />
              <circle cx="53.500" cy="42.500" r="3.500" />
            </g>
          </svg>
          设自选
        </Action>
      </BottomBar>
    </Page>
  );
}
